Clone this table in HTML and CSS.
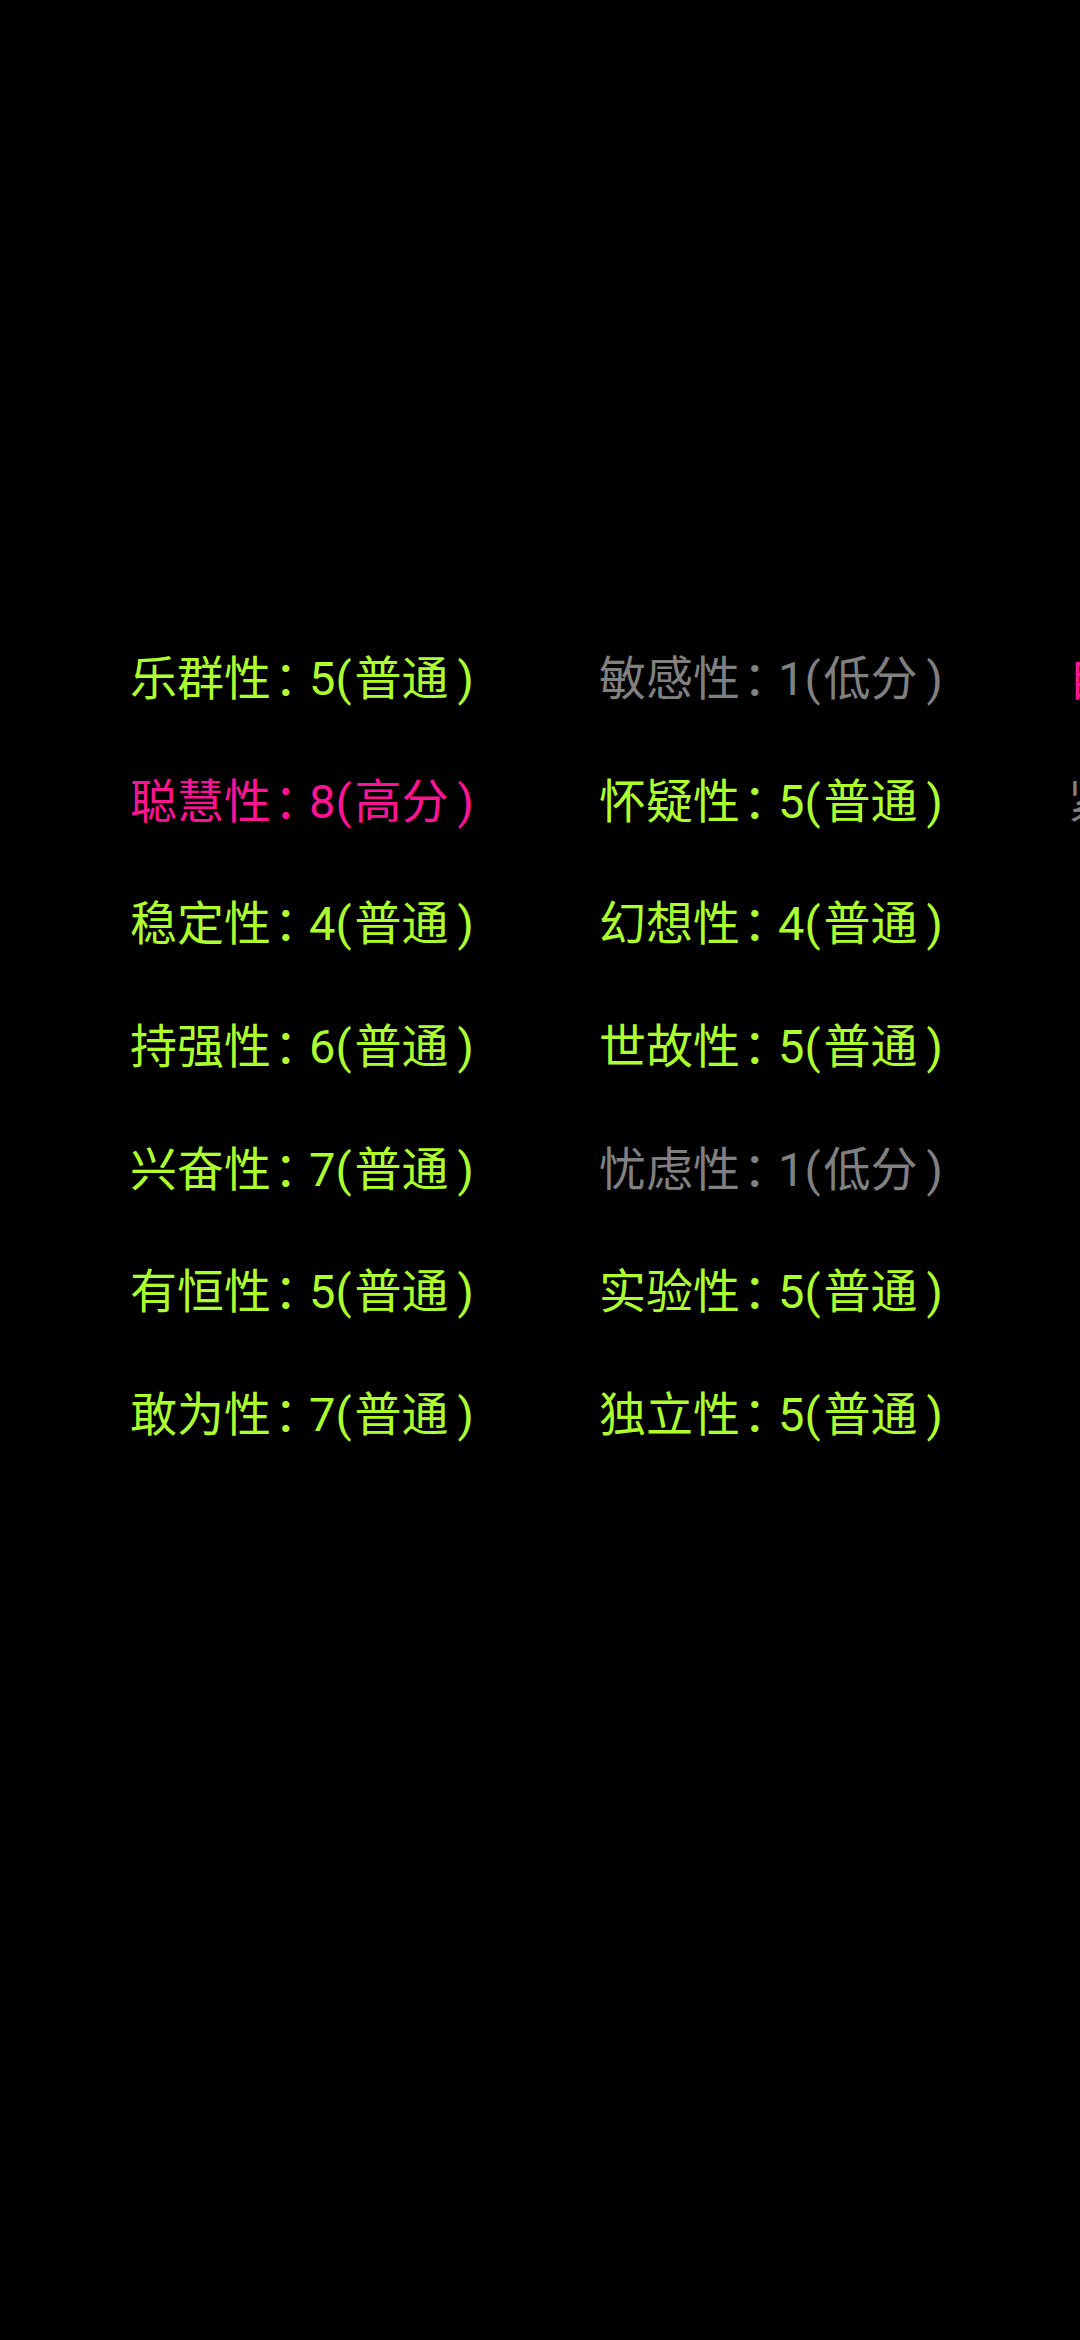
FILE: index.html
```html
<!DOCTYPE html>
<html lang="zh-CN">
<head>
<meta charset="utf-8">
<title>16PF</title>
<link rel="stylesheet" href="styles.css">
</head>
<body>
<div class="board">
  <div class="col">
    <div class="item normal">乐群性<span class="sep">：</span>5(<span class="tag">普通</span>)</div>
    <div class="item high">聪慧性<span class="sep">：</span>8(<span class="tag">高分</span>)</div>
    <div class="item normal">稳定性<span class="sep">：</span>4(<span class="tag">普通</span>)</div>
    <div class="item normal">持强性<span class="sep">：</span>6(<span class="tag">普通</span>)</div>
    <div class="item normal">兴奋性<span class="sep">：</span>7(<span class="tag">普通</span>)</div>
    <div class="item normal">有恒性<span class="sep">：</span>5(<span class="tag">普通</span>)</div>
    <div class="item normal">敢为性<span class="sep">：</span>7(<span class="tag">普通</span>)</div>
  </div>
  <div class="col">
    <div class="item low">敏感性<span class="sep">：</span>1(<span class="tag">低分</span>)</div>
    <div class="item normal">怀疑性<span class="sep">：</span>5(<span class="tag">普通</span>)</div>
    <div class="item normal">幻想性<span class="sep">：</span>4(<span class="tag">普通</span>)</div>
    <div class="item normal">世故性<span class="sep">：</span>5(<span class="tag">普通</span>)</div>
    <div class="item low">忧虑性<span class="sep">：</span>1(<span class="tag">低分</span>)</div>
    <div class="item normal">实验性<span class="sep">：</span>5(<span class="tag">普通</span>)</div>
    <div class="item normal">独立性<span class="sep">：</span>5(<span class="tag">普通</span>)</div>
  </div>
  <div class="col">
    <div class="item high">自律性<span class="sep">：</span>8(<span class="tag">高分</span>)</div>
    <div class="item low">紧张性<span class="sep">：</span>2(<span class="tag">低分</span>)</div>
  </div>
</div>
</body>
</html>
```

FILE: styles.css
```css
html, body {
  margin: 0;
  padding: 0;
  background: #000;
  width: 1080px;
  height: 2340px;
  overflow: hidden;
}

.board {
  display: flex;
  padding-top: 618px;
  padding-left: 130px;
  width: max-content;
}

.col {
  width: 469px;
  flex: none;
  display: flex;
  flex-direction: column;
}

.item {
  font-family: Roboto, "Noto Sans CJK SC", sans-serif;
  font-size: 47px;
  line-height: 122.7px;
  height: 122.7px;
  white-space: nowrap;
}

.sep {
  letter-spacing: -12px;
  padding-left: 3px;
}

.tag {
  padding-left: 3px;
  padding-right: 9px;
}

.normal { color: #adff2f; }
.high { color: #ff1493; }
.low { color: #808080; }
```
